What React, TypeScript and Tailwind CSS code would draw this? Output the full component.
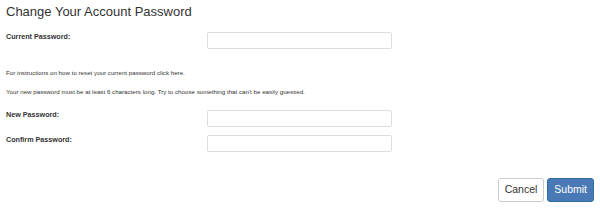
export default function App() {
  return (
    <div className="w-[600px] h-[210px] bg-white font-['Liberation_Sans',Arial,sans-serif] text-[#333] relative">
      <div className="px-[6px] pt-[3px]">
        <h1 className="text-[13px] leading-[18px] font-normal">Change Your Account Password</h1>

        <div className="flex items-start mt-[11px]">
          <label className="w-[201px] text-[7.2px] font-bold leading-[10px]">Current Password:</label>
          <input type="password" className="w-[185px] h-[17px] border border-[#ddd] rounded-[2px]" />
        </div>

        <p className="text-[6.2px] mt-[19px] leading-[10px]">For instructions on how to reset your current password click here.</p>
        <p className="text-[6.2px] mt-[9px] leading-[10px]">
          Your new password must be at least 6 characters long. Try to choose something that can't be easily guessed.
        </p>

        <div className="flex items-start mt-[13px]">
          <label className="w-[201px] text-[7.2px] font-bold leading-[10px]">New Password:</label>
          <input type="password" className="w-[185px] h-[17px] border border-[#ddd] rounded-[2px]" />
        </div>
        <div className="flex items-start mt-[8px]">
          <label className="w-[201px] text-[7.2px] font-bold leading-[10px]">Confirm Password:</label>
          <input type="password" className="w-[185px] h-[17px] border border-[#ddd] rounded-[2px]" />
        </div>
      </div>

      <div className="flex justify-end gap-[3px] pr-[6px] mt-[26px]">
        <button className="h-[24px] px-[6px] text-[10.5px] border border-[#ccc] rounded-[3px] bg-white text-[#333]">Cancel</button>
        <button className="h-[24px] px-[6px] text-[10.5px] border border-[#2e6da4] rounded-[3px] bg-[#4a7ab5] text-white">Submit</button>
      </div>
    </div>
  );
}
